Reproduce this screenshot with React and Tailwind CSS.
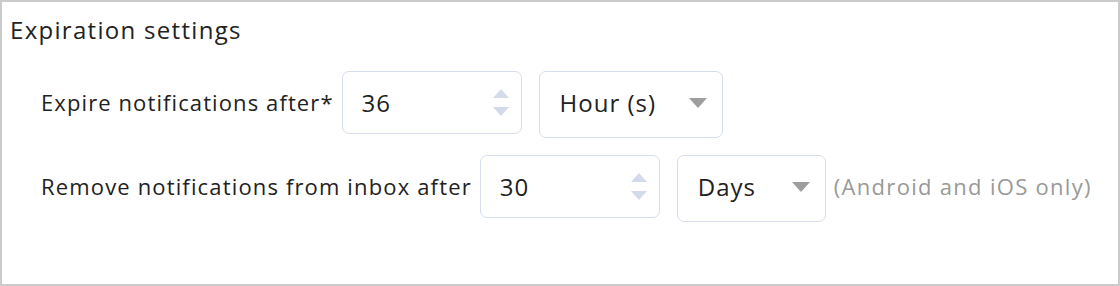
import React from "react";

function NumberBox({ value }) {
  return (
    <div className="w-[180px] h-[63px] border border-[#d6ddec] rounded-[7px] bg-white flex items-center justify-between pl-[19px] pr-[12px]">
      <span className="text-[24px] text-[#222] tracking-[1px]">{value}</span>
      <div className="flex flex-col items-center gap-[9px]">
        <svg width="16" height="9" viewBox="0 0 16 9"><path d="M8 0 L16 9 L0 9 Z" fill="#d3dbea" /></svg>
        <svg width="16" height="9" viewBox="0 0 16 9"><path d="M0 0 L16 0 L8 9 Z" fill="#d3dbea" /></svg>
      </div>
    </div>
  );
}

function SelectBox({ value, w }) {
  return (
    <div className={`${w} h-[67px] border border-[#d6ddec] rounded-[7px] bg-white flex items-center justify-between pl-[20px] pr-[15px] pb-[3px]`}>
      <span className="text-[24px] text-[#222] tracking-[1px]">{value}</span>
      <svg width="18" height="10" viewBox="0 0 18 10"><path d="M0 0 L18 0 L9 10 Z" fill="#9e9e9e" /></svg>
    </div>
  );
}

export default function App() {
  return (
    <div className="w-[1120px] h-[286px] border-2 border-[#cbcbcb] bg-white" style={{ fontFamily: "'Open Sans', sans-serif" }}>
      <div className="pl-[8px] pt-[13px] text-[24px] text-[#222] leading-[30px] tracking-[1.3px]">Expiration settings</div>
      <div className="pl-[39px] pt-[26px] flex flex-col gap-[17px]">
        <div className="flex items-start">
          <span className="h-[63px] flex items-center text-[22px] text-[#222] mr-[8px] tracking-[1.1px]">Expire notifications after*</span>
          <NumberBox value="36" />
          <div className="ml-[17px]"><SelectBox value="Hour (s)" w="w-[184px]" /></div>
        </div>
        <div className="flex items-start">
          <span className="h-[63px] flex items-center text-[22px] text-[#222] mr-[8px] tracking-[1.15px]">Remove notifications from inbox after</span>
          <NumberBox value="30" />
          <div className="ml-[17px]"><SelectBox value="Days" w="w-[149px]" /></div>
          <span className="h-[63px] flex items-center ml-[8px] text-[22px] text-[#999] tracking-[1.3px]">(Android and iOS only)</span>
        </div>
      </div>
    </div>
  );
}
